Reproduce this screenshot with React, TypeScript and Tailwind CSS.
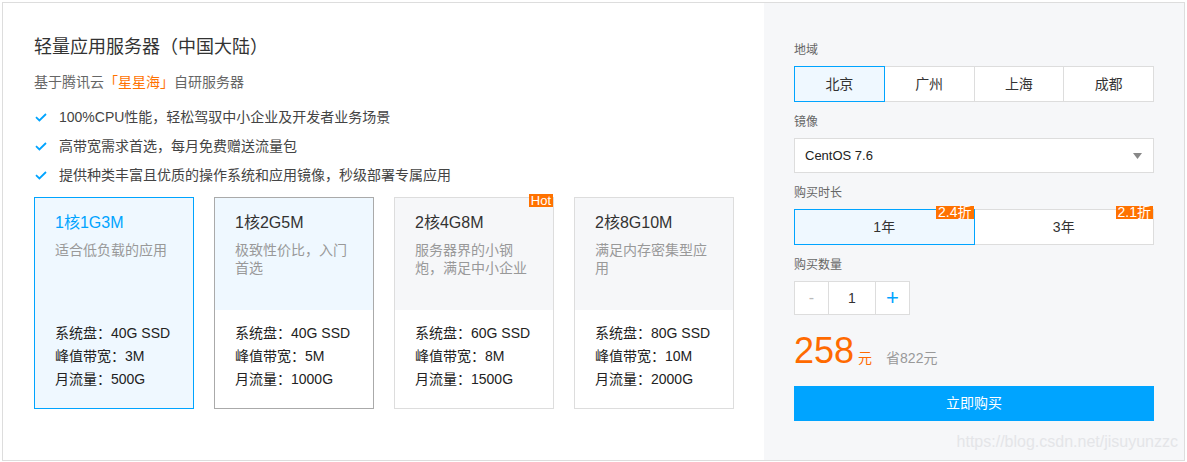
import { useState } from "react";

const FONT = "font-['Liberation_Sans','Noto_Sans_CJK_SC',sans-serif]";

type Plan = {
  name: string;
  desc: string;
  disk: string;
  bw: string;
  flow: string;
  hot?: boolean;
};

const plans: Plan[] = [
  { name: "1核1G3M", desc: "适合低负载的应用", disk: "40G SSD", bw: "3M", flow: "500G" },
  { name: "1核2G5M", desc: "极致性价比，入门首选", disk: "40G SSD", bw: "5M", flow: "1000G" },
  { name: "2核4G8M", desc: "服务器界的小钢炮，满足中小企业", disk: "60G SSD", bw: "8M", flow: "1500G", hot: true },
  { name: "2核8G10M", desc: "满足内存密集型应用", disk: "80G SSD", bw: "10M", flow: "2000G" },
];

const features = [
  "100%CPU性能，轻松驾驭中小企业及开发者业务场景",
  "高带宽需求首选，每月免费赠送流量包",
  "提供种类丰富且优质的操作系统和应用镜像，秒级部署专属应用",
];

function Check() {
  return (
    <svg width="12" height="9" viewBox="0 0 12 9" className="shrink-0">
      <path d="M1 4.2 L4.4 7.4 L11 1" fill="none" stroke="#00a4ff" strokeWidth="1.8" />
    </svg>
  );
}

function PlanCard({ plan, active, hover }: { plan: Plan; active: boolean; hover: boolean }) {
  const border = active ? "border-[#00a4ff]" : hover ? "border-[#aaaaaa]" : "border-[#dddddd]";
  const top = active || hover ? "bg-[#eff8ff]" : "bg-[#f6f7f9]";
  return (
    <div
      className={`relative flex h-[212px] w-[160px] flex-col border ${border} ${
        active ? "bg-[#eff8ff]" : "bg-white"
      }`}
    >
      {plan.hot && (
        <span className="absolute right-0 top-[-4px] bg-[#ff7200] px-[2px] text-[13px] leading-[13px] text-white">
          Hot
        </span>
      )}
      <div className={`h-[112px] px-[20px] pt-[14px] ${top}`}>
        <div className={`text-[16px] leading-[22px] ${active ? "text-[#00a4ff]" : "text-[#333333]"}`}>
          {plan.name}
        </div>
        <div className="mt-[7px] text-[14px] leading-[18px] text-[#999999]">{plan.desc}</div>
      </div>
      <div className="px-[20px] pt-[12px] text-[14px] leading-[23px] text-[#222222]">
        <div>系统盘：{plan.disk}</div>
        <div>峰值带宽：{plan.bw}</div>
        <div>月流量：{plan.flow}</div>
      </div>
    </div>
  );
}

export default function App() {
  const [region, setRegion] = useState("北京");
  const [years, setYears] = useState("1年");
  const [qty, setQty] = useState(1);

  return (
    <div className={`${FONT} p-[2px]`}>
      <div className="flex h-[459px] w-[1183px] border border-[#dddddd] bg-white">
        {/* left: product info */}
        <div className="flex-1 pl-[31px] pt-[32px]">
          <h1 className="text-[18px] leading-[24px] text-[#333333]">轻量应用服务器（中国大陆）</h1>
          <p className="mt-[13px] text-[14px] leading-[20px] text-[#666666]">
            基于腾讯云<span className="text-[#ff7200]">「星星海」</span>自研服务器
          </p>
          <ul className="mt-[15px] space-y-[9px]">
            {features.map((f) => (
              <li key={f} className="flex items-center gap-[12px] pl-[1px] text-[14px] leading-[20px] text-[#444444]">
                <Check />
                {f}
              </li>
            ))}
          </ul>
          <div className="mt-[12px] flex gap-[20px]">
            {plans.map((p, i) => (
              <PlanCard key={p.name} plan={p} active={i === 0} hover={i === 1} />
            ))}
          </div>
        </div>

        {/* right: order form */}
        <div className="relative w-[420px] bg-[#f6f7f9] pl-[30px] pt-[38px]">
          <div className="text-[12px] leading-[18px] text-[#666666]">地域</div>
          <div className="mt-[7px] flex w-[360px]">
            {["北京", "广州", "上海", "成都"].map((r, i) => (
              <button
                key={r}
                onClick={() => setRegion(r)}
                className={`relative h-[36px] flex-1 border text-[14px] text-[#333333] ${i > 0 ? "-ml-px" : ""} ${
                  region === r ? "z-10 border-[#00a4ff] bg-[#eff8ff]" : "border-[#dddddd] bg-white"
                }`}
              >
                {r}
              </button>
            ))}
          </div>

          <div className="mt-[11px] text-[12px] leading-[18px] text-[#666666]">镜像</div>
          <div className="mt-[7px] flex h-[35px] w-[360px] items-center justify-between border border-[#dddddd] bg-white pl-[10px] pr-[11px]">
            <span className="text-[13px] text-[#222222]">CentOS 7.6</span>
            <svg width="9" height="6" viewBox="0 0 9 6">
              <path d="M0 0 H9 L4.5 6 Z" fill="#888888" />
            </svg>
          </div>

          <div className="mt-[11px] text-[12px] leading-[18px] text-[#666666]">购买时长</div>
          <div className="mt-[7px] flex w-[360px]">
            {[
              ["1年", "2.4折"],
              ["3年", "2.1折"],
            ].map(([y, off], i) => (
              <button
                key={y}
                onClick={() => setYears(y)}
                className={`relative h-[36px] flex-1 border text-[14px] text-[#333333] ${i > 0 ? "-ml-px" : ""} ${
                  years === y ? "z-10 border-[#00a4ff] bg-[#eff8ff]" : "border-[#dddddd] bg-white"
                }`}
              >
                <span className="absolute right-0 top-[-4px] bg-[#ff7200] px-[2px] text-[14px] leading-[13px] text-white">
                  {off}
                </span>
                {y}
              </button>
            ))}
          </div>

          <div className="mt-[11px] text-[12px] leading-[18px] text-[#666666]">购买数量</div>
          <div className="mt-[7px] flex h-[34px]">
            <button
              onClick={() => setQty(Math.max(1, qty - 1))}
              className="w-[35px] border border-[#dddddd] bg-white text-[16px] text-[#bbbbbb]"
            >
              -
            </button>
            <div className="-ml-px flex w-[48px] items-center justify-center border border-[#dddddd] bg-white text-[14px] text-[#333333]">
              {qty}
            </div>
            <button
              onClick={() => setQty(qty + 1)}
              className="-ml-px w-[35px] border border-[#dddddd] bg-white text-[22px] leading-none text-[#00a4ff]"
            >
              +
            </button>
          </div>

          <div className="mt-[18px] flex h-[36px] items-baseline">
            <span className="text-[36px] leading-[36px] text-[#ff6a00]">{258 * qty}</span>
            <span className="ml-[4px] text-[14px] text-[#ff6a00]">元</span>
            <span className="ml-[14px] text-[14px] text-[#999999]">省{822 * qty}元</span>
          </div>

          <button className="mt-[17px] h-[35px] w-[360px] bg-[#00a4ff] text-[14px] text-white">立即购买</button>

          <div className="absolute bottom-[8px] right-[6px] text-[16px] leading-[20px] text-[#e4e5e8]">
            https://blog.csdn.net/jisuyunzzc
          </div>
        </div>
      </div>
    </div>
  );
}
